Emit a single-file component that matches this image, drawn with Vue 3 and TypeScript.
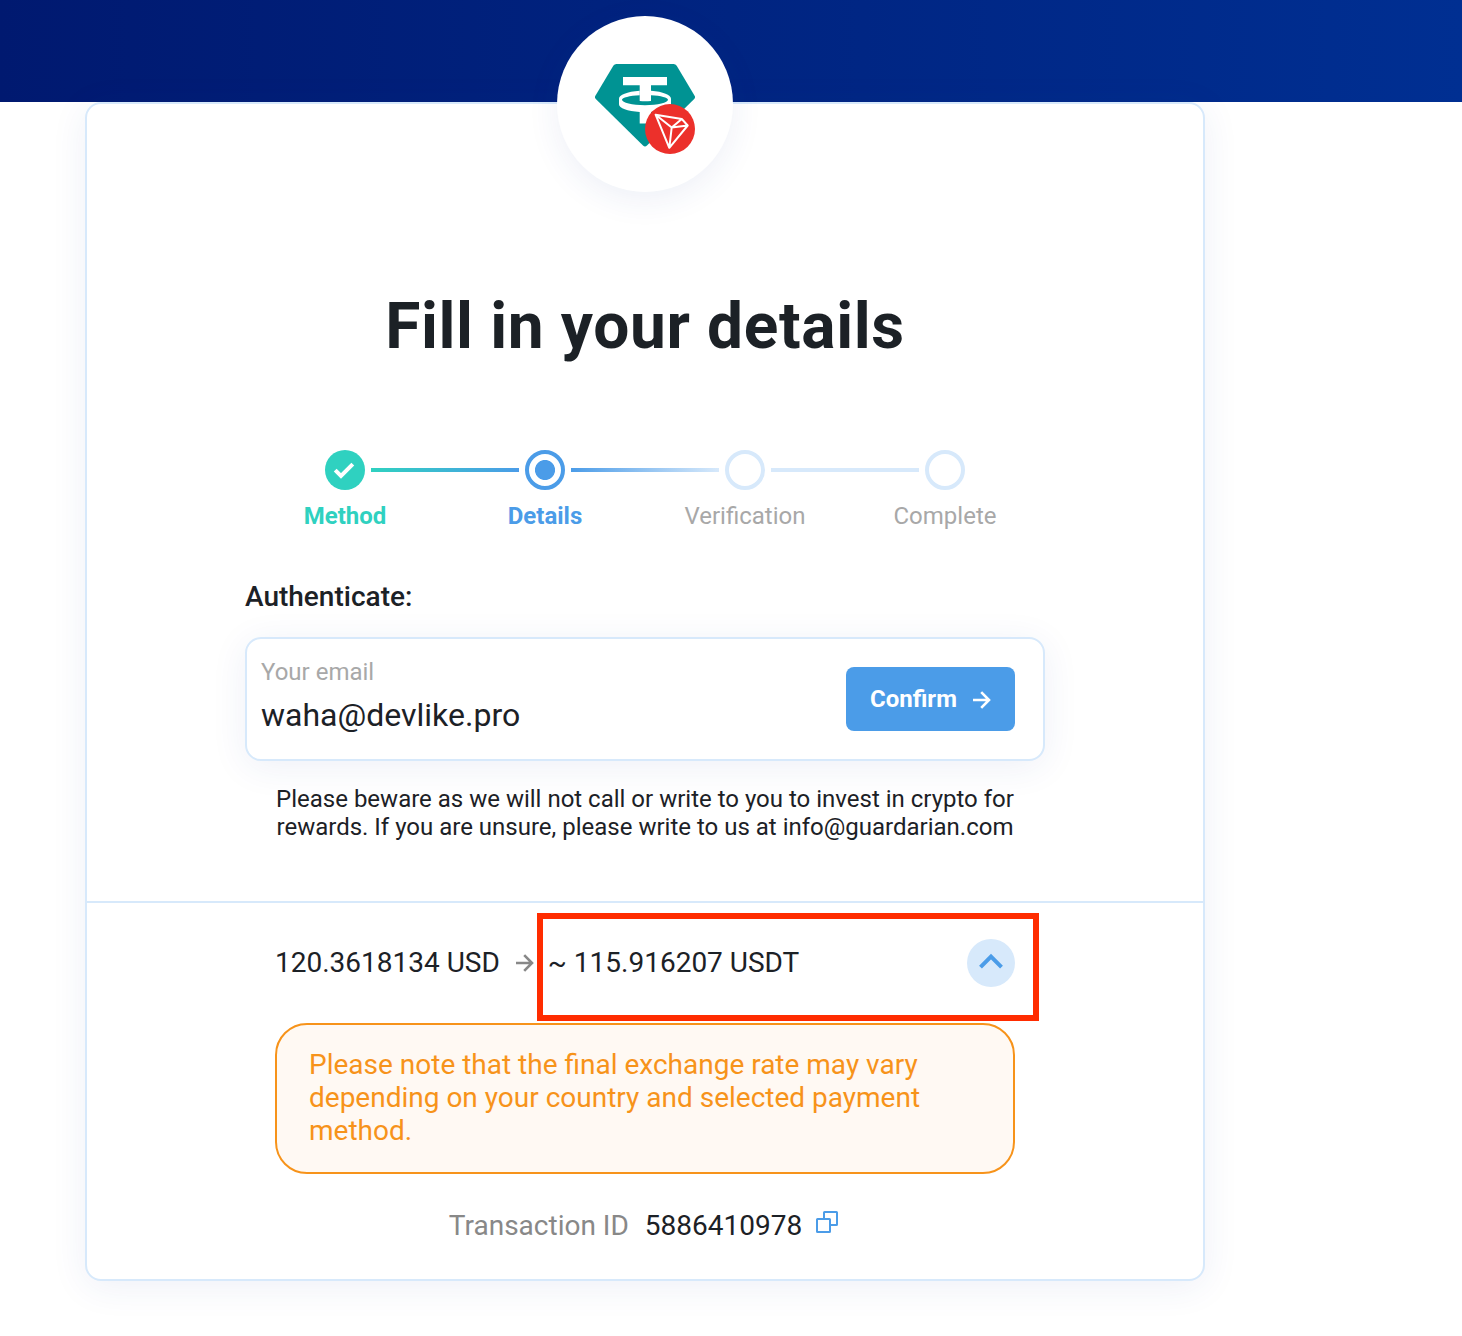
<script setup lang="ts">
type StepState = 'done' | 'current' | 'pending'

interface Step {
  label: string
  state: StepState
}

const steps: Step[] = [
  { label: 'Method', state: 'done' },
  { label: 'Details', state: 'current' },
  { label: 'Verification', state: 'pending' },
  { label: 'Complete', state: 'pending' },
]

const email = 'waha@devlike.pro'
const transactionId = '5886410978'
</script>

<template>
  <div class="page">
    <header class="banner"></header>
    <main class="card">
      <div class="coin">
        <svg width="100" height="90" viewBox="0 0 100 90">
          <path d="M21.5 0H78.5Q80.6 0 81.7 1.8L99.6 31.7Q100.6 33.5 99.2 35L52 81.6Q50 83.4 48 81.6L.8 35Q-.6 33.5 .4 31.7L18.3 1.8Q19.4 0 21.5 0Z" fill="#009393" />
          <path d="M28 13H72V21.3H56V37Q50 37.7 44.7 37V21.3H28Z" fill="#fff" />
          <path fill-rule="evenodd" d="M44.7 26.8C32 27.7 24 31 24 34.8V40.3C24 44.3 32.500 47.200 44.700 47.900V59.500H56V47.900C68 47.200 76 44.300 76 40.300V34.800C76 31 68 27.700 56 26.800V31.200C66 31.700 73 33.500 73 35.800C73 38.800 63 41.200 50 41.200S27 38.800 27 35.800C27 33.500 34.500 31.700 44.700 31.200Z" fill="#fff" />
          <circle cx="75" cy="65" r="25" fill="#ec302b" />
          <path d="M60.6 50.700L86.800 55L92.700 61.500L74.300 83.800ZM60.600 50.700L76.700 63.500L86.800 55M76.700 63.500L92.700 61.500M76.700 63.500L74.300 83.800" fill="none" stroke="#fff" stroke-width="2" stroke-linejoin="round" />
        </svg>
      </div>

      <section class="details">
        <h1>Fill in your details</h1>

        <ol class="steps">
          <li v-for="step in steps" :key="step.label" class="step" :class="step.state">
            <span class="marker">
              <svg v-if="step.state === 'done'" width="40" height="40" viewBox="0 0 40 40">
                <path d="M10.200 20.100L16 25.900L27.800 14.100" fill="none" stroke="#fff" stroke-width="4" />
              </svg>
            </span>
            <span class="label">{{ step.label }}</span>
          </li>
        </ol>

        <h2>Authenticate:</h2>
        <div class="email-box">
          <div class="field">
            <span class="caption">Your email</span>
            <span class="value">{{ email }}</span>
          </div>
          <button class="confirm" type="button">
            <span>Confirm</span>
            <svg width="18" height="18" viewBox="0 0 18 18">
              <path d="M0 9H16M8.200 1.200L16 9L8.200 16.800" fill="none" stroke="currentColor" stroke-width="2.600" />
            </svg>
          </button>
        </div>
        <p class="warning">
          Please beware as we will not call or write to you to invest in crypto for<br />rewards. If you are unsure, please write to us at info@guardarian.com
        </p>
      </section>

      <section class="summary">
        <div class="rate">
          <span class="amount">120.3618134 USD</span>
          <svg class="to" width="18" height="18" viewBox="0 0 18 18">
            <path d="M0 9H16M8.200 1.200L16 9L8.200 16.800" fill="none" stroke="currentColor" stroke-width="2.600" />
          </svg>
          <span class="amount">~ 115.916207 USDT</span>
          <button class="toggle" type="button" aria-label="Collapse">
            <svg width="48" height="48" viewBox="0 0 48 48">
              <path d="M13.500 28.200L24 17.700L34.500 28.200" fill="none" stroke="#4b9ce8" stroke-width="4" />
            </svg>
          </button>
          <div class="highlight"></div>
        </div>
        <div class="note">
          Please note that the final exchange rate may vary<br />depending on your country and selected payment<br />method.
        </div>
        <div class="transaction">
          <span class="tx-label">Transaction ID</span>
          <span class="tx-id">{{ transactionId }}</span>
          <svg width="22" height="22" viewBox="0 0 22 22">
            <path d="M8 7V1.500Q8 1 8.500 1H20.500Q21 1 21 1.500V13.500Q21 14 20.500 14H15" fill="none" stroke="#4b9ce8" stroke-width="2" />
            <rect x="1" y="8" width="13" height="13" rx=".5" fill="none" stroke="#4b9ce8" stroke-width="2" />
          </svg>
        </div>
      </section>
    </main>
  </div>
</template>

<style>
body {
  margin: 0;
  background: #fff;
}
</style>

<style scoped>
.page {
  height: 1336px;
  overflow: hidden;
  font-family: Roboto, sans-serif;
  color: #1c2126;
}
.banner {
  height: 102px;
  background: linear-gradient(90deg, #001970 0%, #002f92 100%);
}
.card {
  position: relative;
  box-sizing: border-box;
  width: 1120px;
  height: 1179px;
  margin-left: 85px;
  border: 2px solid #d7e9fb;
  border-radius: 16px;
  background: #fff;
  box-shadow: 0 6px 36px rgba(32, 68, 156, 0.08);
}
.coin {
  position: absolute;
  z-index: 2;
  top: -88px;
  left: 470px;
  display: flex;
  box-sizing: border-box;
  width: 176px;
  height: 176px;
  padding: 48px 38px 0;
  border-radius: 50%;
  background: #fff;
  box-shadow: 0 8px 32px rgba(32, 68, 156, 0.08);
}
.details {
  box-sizing: border-box;
  height: 797px;
  padding: 185px 158px 0;
}
h1 {
  margin: 0;
  font-size: 64px;
  font-weight: 700;
  line-height: 76px;
  letter-spacing: 0.64px;
  text-align: center;
}
.steps {
  display: flex;
  justify-content: center;
  margin: 85px 0 0;
  padding: 0;
  list-style: none;
}
.step {
  position: relative;
  display: flex;
  flex-direction: column;
  align-items: center;
  gap: 12px;
  width: 200px;
}
.step:not(:last-child)::after {
  content: '';
  position: absolute;
  top: 18px;
  left: 126px;
  width: 148px;
  height: 4px;
  background: #d7e9fb;
}
.step.done:not(:last-child)::after {
  background: linear-gradient(90deg, #2fd1c0, #4b9ce8);
}
.step.current:not(:last-child)::after {
  background: linear-gradient(90deg, #4b9ce8, #d7e9fb);
}
.marker {
  display: flex;
  box-sizing: border-box;
  width: 40px;
  height: 40px;
  border: 4px solid #d7e9fb;
  border-radius: 50%;
}
.done .marker {
  border: 0;
  background: #2fd1c0;
}
.current .marker {
  border-color: #4b9ce8;
  background: radial-gradient(circle, #4b9ce8 9.6px, #fff 10.4px);
}
.label {
  font-size: 24px;
  line-height: 28px;
  color: #a8a8a8;
}
.done .label {
  font-weight: 700;
  color: #2fd1c0;
}
.current .label {
  font-weight: 700;
  color: #4b9ce8;
}
h2 {
  margin: 50px 0 0;
  font-size: 28px;
  font-weight: 500;
  line-height: 33px;
}
.email-box {
  display: flex;
  align-items: center;
  justify-content: space-between;
  box-sizing: border-box;
  height: 124px;
  margin-top: 24px;
  padding: 0 28px 0 14px;
  border: 2px solid #d7e9fb;
  border-radius: 16px;
  background: #fff;
  box-shadow: 0 6px 36px rgba(32, 68, 156, 0.08);
}
.field {
  display: flex;
  flex-direction: column;
  gap: 10px;
  padding-bottom: 6px;
}
.caption {
  font-size: 24px;
  line-height: 28px;
  color: #a8a8a8;
}
.value {
  font-size: 32px;
  line-height: 38px;
}
.confirm {
  display: flex;
  align-items: center;
  gap: 16px;
  box-sizing: border-box;
  width: 169px;
  height: 64px;
  padding: 0 24px;
  border: 0;
  border-radius: 8px;
  background: #4b9ce8;
  color: #fff;
  font-family: inherit;
  font-size: 24px;
  font-weight: 700;
}
.confirm svg {
  margin-top: 2px;
}
.warning {
  position: relative;
  margin: 24px 0 0;
  font-size: 24px;
  line-height: 28px;
  text-align: center;
  white-space: nowrap;
}
.summary {
  padding: 0 188px;
  border-top: 2px solid #d7e9fb;
}
.rate {
  position: relative;
  display: flex;
  align-items: center;
  height: 120px;
  font-size: 28px;
  white-space: nowrap;
}
.amount {
  padding-bottom: 2px;
}
.to {
  margin: 0 14px 0 16px;
  color: #888;
}
.toggle {
  width: 48px;
  height: 48px;
  margin-left: auto;
  padding: 0;
  border: 0;
  border-radius: 50%;
  background: #d7e9fb;
}
.highlight {
  position: absolute;
  top: 10px;
  left: 262px;
  box-sizing: border-box;
  width: 502px;
  height: 108px;
  border: 6px solid #ff2c00;
}
.note {
  box-sizing: border-box;
  height: 151px;
  padding: 23px 32px;
  border: 2px solid #f7931a;
  border-radius: 32px;
  background: #fff9f3;
  color: #f7931a;
  font-size: 28px;
  line-height: 33px;
  white-space: nowrap;
}
.transaction {
  display: flex;
  justify-content: center;
  margin-top: 35px;
  font-size: 28px;
  line-height: 33px;
}
.tx-label {
  margin-right: 16px;
  color: #888;
}
.transaction svg {
  margin: 2px 3px 0 14px;
}
</style>
